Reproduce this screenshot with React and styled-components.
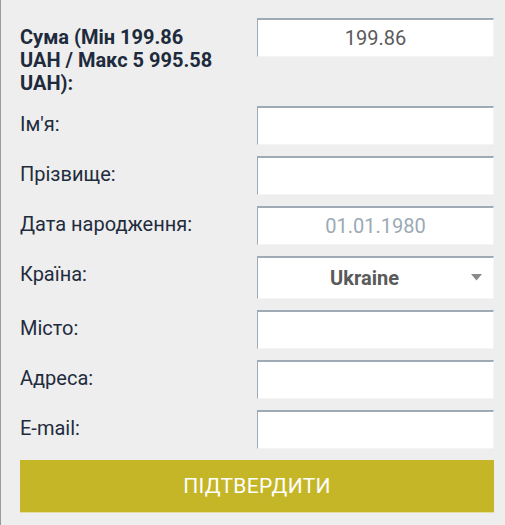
import React from "react";
import styled, { createGlobalStyle } from "styled-components";

const Global = createGlobalStyle`
  html, body { margin: 0; padding: 0; background: #eeeeee; }
  body { font-family: Roboto, "Liberation Sans", Arial, sans-serif; }
  * { box-sizing: border-box; }
`;

const Page = styled.div`
  min-height: 525px;
  background: #eeeeee;
  border-left: 1px solid #9a9a9a;
  padding: 18px 11px 12px 19px;
`;

const Form = styled.form`
  display: flex;
  flex-direction: column;
  gap: 11px;
`;

const Row = styled.div`
  display: grid;
  grid-template-columns: 1fr 237px;
  align-items: start;
`;

const Label = styled.label`
  padding: ${(p) => (p.$strong ? "8px 37px 0 0" : "7px 37px 0 0")};
  font-size: 20px;
  line-height: 23px;
  font-weight: ${(p) => (p.$strong ? 700 : 400)};
  color: ${(p) => (p.$strong ? "#1d2b3c" : "#1f2c3d")};
`;

const Input = styled.input`
  display: block;
  width: 100%;
  height: 39px;
  margin: 0;
  padding: 0 8px;
  background: #ffffff;
  border-style: solid;
  border-width: 2px 1px 1px 1px;
  border-color: #9eabb7 #f4f4f4 #f4f4f4 #9eabb7;
  border-radius: 0;
  outline: none;
  font-family: Roboto, "Liberation Sans", Arial, sans-serif;
  font-size: 20px;
  text-align: center;
  color: ${(p) => (p.$muted ? "#9aa9b6" : "#5a5a5a")};
  &::placeholder { color: #9aa9b6; }
`;

const SelectWrap = styled.div`
  position: relative;
`;

const Select = styled.select`
  display: block;
  width: 100%;
  height: 43px;
  margin: 0;
  padding: 0 22px 0 0;
  appearance: none;
  -webkit-appearance: none;
  background: #ffffff;
  border-style: solid;
  border-width: 2px 1px 1px 1px;
  border-color: #9eabb7 #f4f4f4 #f4f4f4 #9eabb7;
  border-radius: 0;
  outline: none;
  font-family: Roboto, "Liberation Sans", Arial, sans-serif;
  font-size: 20px;
  font-weight: 700;
  color: #5a5a5a;
  text-align: center;
  text-align-last: center;
`;

const Arrow = styled.svg`
  position: absolute;
  right: 12px;
  top: 18px;
  width: 11px;
  height: 7px;
  pointer-events: none;
`;

const Submit = styled.button`
  display: block;
  width: 100%;
  height: 53px;
  margin: 0;
  border: none;
  border-bottom: 1px solid #e4dca0;
  background: #c5b628;
  color: #ffffff;
  font-family: Roboto, "Liberation Sans", Arial, sans-serif;
  font-size: 21px;
  font-weight: 400;
  text-transform: uppercase;
  letter-spacing: 0.3px;
  cursor: pointer;
`;

const fields = [
  { id: "first", label: "Ім'я:" },
  { id: "last", label: "Прізвище:" },
];

const fields2 = [
  { id: "city", label: "Місто:" },
  { id: "address", label: "Адреса:" },
  { id: "email", label: "E-mail:" },
];

export default function App() {
  return (
    <>
      <Global />
      <Page>
        <Form onSubmit={(e) => e.preventDefault()}>
          <Row>
            <Label $strong htmlFor="amount">
              Сума (Мін 199.86 UAH / Макс 5 995.58 UAH):
            </Label>
            <Input id="amount" defaultValue="199.86" />
          </Row>
          {fields.map((f) => (
            <Row key={f.id}>
              <Label htmlFor={f.id}>{f.label}</Label>
              <Input id={f.id} />
            </Row>
          ))}
          <Row>
            <Label htmlFor="birth">Дата народження:</Label>
            <Input id="birth" $muted defaultValue="01.01.1980" />
          </Row>
          <Row>
            <Label htmlFor="country">Країна:</Label>
            <SelectWrap>
              <Select id="country" defaultValue="UA">
                <option value="UA">Ukraine</option>
              </Select>
              <Arrow viewBox="0 0 11 7">
                <path d="M0 0 L11 0 L5.5 6.5 Z" fill="#8a8a8a" />
              </Arrow>
            </SelectWrap>
          </Row>
          {fields2.map((f) => (
            <Row key={f.id}>
              <Label htmlFor={f.id}>{f.label}</Label>
              <Input id={f.id} />
            </Row>
          ))}
          <Submit type="submit">Підтвердити</Submit>
        </Form>
      </Page>
    </>
  );
}
